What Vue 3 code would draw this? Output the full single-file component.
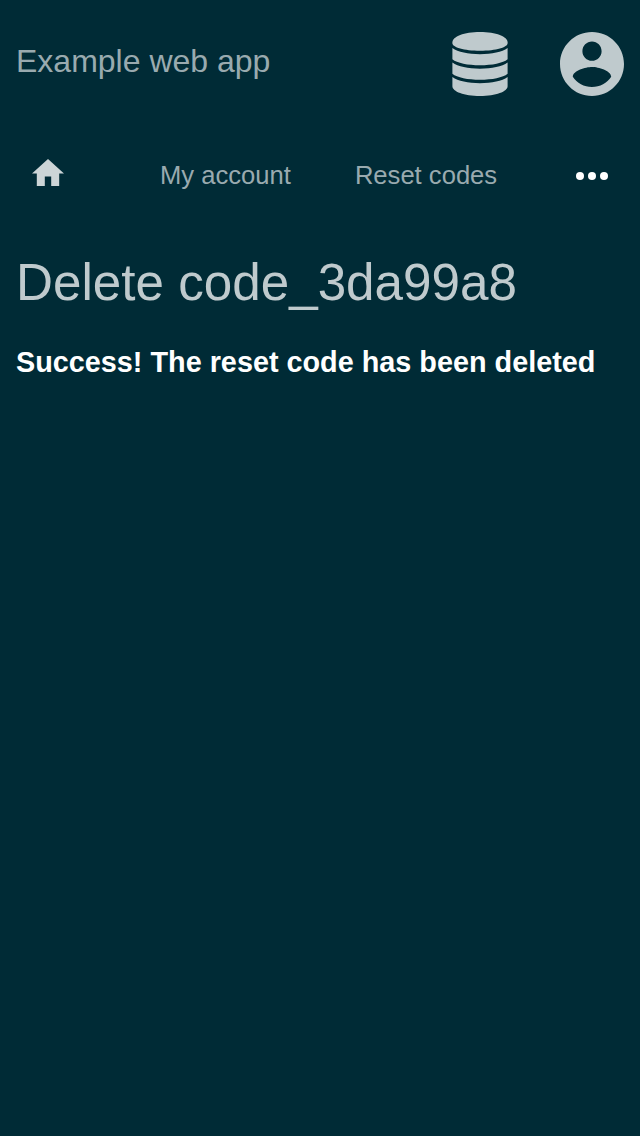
<script setup>
const links = ['My account', 'Reset codes']
</script>

<template>
  <div class="page">
    <header class="header">
      <span class="brand">Example web app</span>
      <svg class="database" viewBox="0 0 56 64" aria-label="Database">
        <path d="M28 0C12 0 .4 4.600.4 10.300v1C.4 15.300 12 18.800 28 18.800s27.600-3.500 27.600-7.500v-1C55.600 4.600 44 0 28 0z" />
        <path d="M.4 16.100C6 20.200 16 22.200 28 22.200s22-2 27.600-6.100v11.200C51 31.200 40 33.300 28 33.300S5 31.200.4 27.300z" />
        <path d="M.4 30.600C6 34.700 16 36.700 28 36.700s22-2 27.600-6.100v11.200C51 45.700 40 47.800 28 47.800S5 45.700.4 41.800z" />
        <path d="M.4 45.100C6 49.200 16 51.200 28 51.200s22-2 27.600-6.100v9.200C55.600 59.600 44 64 28 64S.4 59.600.4 54.300z" />
      </svg>
      <svg class="account" viewBox="2 2 20 20" aria-label="Account">
        <path d="M12 2C6.480 2 2 6.480 2 12s4.480 10 10 10 10-4.480 10-10S17.520 2 12 2zm0 3c1.660 0 3 1.340 3 3s-1.340 3-3 3-3-1.340-3-3 1.340-3 3-3zm0 14.200c-2.500 0-4.710-1.280-6-3.220.03-1.990 4-3.080 6-3.080 1.990 0 5.970 1.090 6 3.080-1.290 1.940-3.500 3.220-6 3.220z" />
      </svg>
    </header>
    <nav class="nav">
      <svg class="home" viewBox="2 3 20 17" aria-label="Home">
        <path d="M10 20v-6h4v6h5v-8h3L12 3 2 12h3v8z" />
      </svg>
      <a v-for="link in links" :key="link" class="link">{{ link }}</a>
      <svg class="more" viewBox="0 0 32 8" aria-label="More">
        <circle cx="4" cy="4" r="4" /><circle cx="16" cy="4" r="4" /><circle cx="28" cy="4" r="4" />
      </svg>
    </nav>
    <main class="main">
      <h1>Delete code_3da99a8</h1>
      <p>Success! The reset code has been deleted</p>
    </main>
  </div>
</template>

<style>
body { margin: 0; background: #002b36; }
</style>

<style scoped>
.page { min-height: 1136px; background: #002b36; font-family: "Liberation Sans", Arial, sans-serif; color: #99aaaf; }
svg { display: block; fill: #bfcacd; }
.header { height: 128px; box-sizing: border-box; display: flex; align-items: center; padding: 0 16px; }
.brand { flex: 1; font-size: 32px; line-height: 36px; padding-bottom: 6px; }
.database { width: 56px; height: 64px; margin-right: 52px; }
.account { width: 64px; height: 64px; }
.nav { height: 96px; display: flex; align-items: center; padding: 0 32px; }
.home { width: 32px; height: 27.2px; margin: 0 96px 7.2px 0; fill: #ccd5d7; }
.link { font-size: 25.6px; line-height: 30px; margin-right: 64px; padding-bottom: 2px; }
.more { width: 32px; height: 8px; margin-left: auto; fill: #fff; }
.main { padding: 30px 16px; }
h1 { margin: 0; font-size: 51.2px; line-height: 58px; font-weight: 400; color: #bfcacd; }
p { margin: 33px 0 0; font-size: 28.8px; line-height: 34px; font-weight: 700; color: #fff; white-space: nowrap; }
</style>
